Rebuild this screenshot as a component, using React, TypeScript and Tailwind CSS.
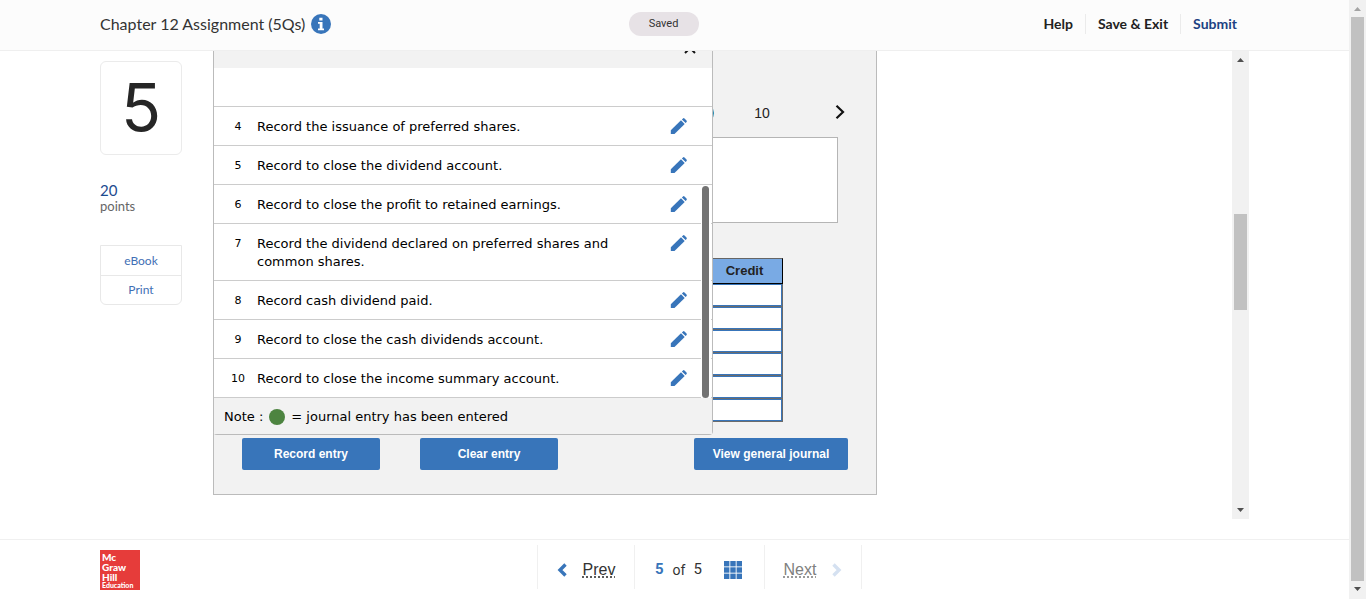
import React, { useState } from 'react';

interface Entry {
  id: number;
  text: string;
}

const entries: Entry[] = [
  { id: 4, text: 'Record the issuance of preferred shares.' },
  { id: 5, text: 'Record to close the dividend account.' },
  { id: 6, text: 'Record to close the profit to retained earnings.' },
  { id: 7, text: 'Record the dividend declared on preferred shares and common shares.' },
  { id: 8, text: 'Record cash dividend paid.' },
  { id: 9, text: 'Record to close the cash dividends account.' },
  { id: 10, text: 'Record to close the income summary account.' },
];

const journalRows = [1, 2, 3, 4, 5, 6];

const Arrow: React.FC<{ down?: boolean; className: string }> = ({ down, className }) => (
  <svg width="7" height="4" viewBox="0 0 7 4" className={className} aria-hidden="true">
    <path d={down ? 'M0 0h7L3.5 4z' : 'M0 4h7L3.5 0z'} fill="currentColor" />
  </svg>
);

const InfoIcon: React.FC = () => (
  <svg width="20" height="20" viewBox="0 0 20 20" aria-hidden="true">
    <circle cx="10" cy="10" r="10" fill="#3875ba" />
    <path d="M8.3 3.8h3.2v2.700H8.3zM7 8h4.500v6.500H13v1.700H7v-1.700h1.700V9.700H7z" fill="#fff" />
  </svg>
);

const PencilIcon: React.FC = () => (
  <svg width="18" height="18" viewBox="0 0 18 18" fill="currentColor" aria-hidden="true">
    <path d="M.8 17V13.300L11 3.300l3.700 3.700L4.500 17z" />
    <path d="M11.900 2.400l1.100-1q.8-.6 1.500.1l2 2q.7.700.1 1.500l-1 1.100z" />
  </svg>
);

const Header: React.FC = () => (
  <header className="grid h-[51px] shrink-0 grid-cols-[1fr_auto_1fr] items-center border-b border-[#efefef] bg-[#fcfcfc] pb-[2px] pl-[100px] pr-28">
    <div className="flex items-center gap-[6px]">
      <h1 className="font-['Lato',sans-serif] text-base text-[#333]">Chapter 12 Assignment (5Qs)</h1>
      <button type="button" aria-label="Assignment information">
        <InfoIcon />
      </button>
    </div>
    <span className="mr-[10px] flex h-6 w-[70px] items-center justify-center rounded-full bg-[#e7e2e6] font-['Roboto',sans-serif] text-[11px] text-[#333]">
      Saved
    </span>
    <nav className="flex items-center justify-end font-['Lato',sans-serif] text-sm font-bold text-[#222]">
      <a href="#help" className="pr-3">Help</a>
      <a href="#save" className="border-l border-[#ebebeb] px-3">Save &amp; Exit</a>
      <a href="#submit" className="border-l border-[#ebebeb] pl-3 text-[#1d4283]">Submit</a>
    </nav>
  </header>
);

const Sidebar: React.FC = () => (
  <aside className="w-[82px] shrink-0 pt-[10px] font-['Lato',sans-serif]">
    <div className="flex h-[94px] items-center justify-center rounded-md border border-[#ebebeb] pb-[2px] font-['Inter',sans-serif] text-[66px] leading-none text-[#262626]">
      5
    </div>
    <div className="mt-[27px] text-[15px] leading-4 text-[#1d4b8f]">20</div>
    <div className="text-[13px] leading-4 text-[#666]">points</div>
    <div className="mt-[31px] flex flex-col rounded-b-md border border-[#e8e8e8] text-center text-xs text-[#3f6fb5]">
      <a href="#ebook" className="leading-[29px]">eBook</a>
      <a href="#print" className="border-t border-[#e8e8e8] leading-[28px]">Print</a>
    </div>
  </aside>
);

const EntryList: React.FC<{ onClose: () => void }> = ({ onClose }) => (
  <div className="absolute -left-px top-0 w-[500px] rounded-b-sm border-x border-b border-[#bbb] bg-white font-['DejaVu_Sans',sans-serif] text-[13px] leading-[18px] text-black">
    <div className="flex h-[17px] justify-end overflow-hidden bg-[#f2f2f2] pr-4">
      <button type="button" onClick={onClose} aria-label="Close" className="-mt-[9px] h-3 w-3">
        <svg width="12" height="12" viewBox="0 0 12 12">
          <path d="M1 1l10 10M11 1L1 11" stroke="#111" strokeWidth="2" />
        </svg>
      </button>
    </div>
    <div className="h-[39px] border-b border-[#ccc]" />
    <ul>
      {entries.map((entry) => (
        <li key={entry.id} className="flex items-start border-b border-[#ccc] pb-[9px] pr-6 pt-[11px]">
          <span className="w-[43px] shrink-0 pl-[5px] text-center text-[11px]">{entry.id}</span>
          <span className="w-[380px]">{entry.text}</span>
          <button type="button" aria-label={`Edit entry ${entry.id}`} className="-mt-px ml-auto text-[#3875ba]">
            <PencilIcon />
          </button>
        </li>
      ))}
    </ul>
    <div className="flex h-9 items-center gap-[6px] bg-[#f2f2f2] pl-[10px] pt-[2px]">
      Note :
      <span className="h-4 w-4 rounded-full bg-[#4d8440]" />
      <span>= journal entry has been entered</span>
    </div>
    {/* list scroll thumb */}
    <div className="absolute bottom-9 right-px h-[212px] w-[10px] bg-white px-[2px] pl-px">
      <div className="h-[212px] rounded-full bg-[#737373]" />
    </div>
  </div>
);

const Worksheet: React.FC = () => {
  const [listOpen, setListOpen] = useState(true);
  const buttonStyle = 'h-8 rounded-xs bg-[#3875ba] text-xs font-bold text-white';

  return (
    <section className="relative ml-[31px] w-[664px] shrink-0 self-start border-x border-b border-[#bbb] bg-[#f2f2f2] px-7 pb-6 pt-12 font-['Liberation_Sans',sans-serif]">
      <div className="flex h-7 items-center justify-end text-sm text-[#222]">
        <button type="button" aria-label="Entry 9" className="h-5 w-5 rounded-full bg-[#1c86ad]" />
        <button type="button" className="ml-7 w-10 text-center">10</button>
        <button type="button" aria-label="Next entries" className="ml-[50px] flex w-4 justify-center">
          <svg width="10" height="16" viewBox="0 0 10 16" fill="none">
            <path d="M1.5 0.8l6.5 6.2-6.5 6.2" stroke="#111" strokeWidth="2.2" />
          </svg>
        </button>
      </div>
      <div className="mr-[10px] mt-[10px] h-[86px] border border-[#b5b5b5] bg-white" />

      <table className="mt-[35px] w-[541px] table-fixed border-separate border-spacing-0">
        <thead>
          <tr className="h-[26px] bg-[#79aae4] text-[13px] leading-none text-[#222]">
            <th className="border-b border-t border-b-black border-t-[#666]" />
            <th className="w-[76px] border-b border-r border-t border-b-black border-r-black border-t-[#666] p-0 pb-[2px]">Credit</th>
          </tr>
        </thead>
        <tbody>
          {journalRows.map((row) => (
            <tr key={row}>
              {['account', 'credit'].map((col) => (
                <td key={col} className="border-b border-r border-[#6b6b6b] p-0">
                  <input
                    type="text"
                    aria-label={`${col} ${row}`}
                    className="block h-[22px] w-full border border-[#3875ba] bg-white px-1 text-xs"
                  />
                </td>
              ))}
            </tr>
          ))}
        </tbody>
      </table>

      <div className="mt-4 flex">
        <button type="button" className={`${buttonStyle} w-[138px]`}>Record entry</button>
        <button type="button" className={`${buttonStyle} ml-10 w-[138px]`}>Clear entry</button>
        <button type="button" className={`${buttonStyle} ml-auto w-[154px]`}>View general journal</button>
      </div>

      {listOpen && <EntryList onClose={() => setListOpen(false)} />}
    </section>
  );
};

const Chevron: React.FC<{ right?: boolean }> = ({ right }) => (
  <svg width="10" height="14" viewBox="0 0 10 14" fill="none" aria-hidden="true">
    <path d={right ? 'M1.500 1.500L7 7l-5.500 5.500' : 'M8.500 1.500L3 7l5.500 5.500'} stroke="currentColor" strokeWidth="3.4" />
  </svg>
);

const Footer: React.FC = () => (
  <footer className="grid h-[60px] shrink-0 grid-cols-[1fr_auto_1fr] items-start border-t border-[#f0f0f0] bg-white pl-[100px] pr-[50px]">
    <div className="mt-[10px] h-10 w-10 bg-[#e63c3a] pl-[2px] pt-[2px] font-['Lato',sans-serif] text-[10px] font-black leading-[10px] text-white">
      <div>Mc</div>
      <div>Graw</div>
      <div>Hill</div>
      <div className="text-[7px] leading-[7px]">Education</div>
    </div>
    <nav className="mt-[5px] flex h-11 items-center text-base text-[#333]">
      <a href="#prev" className="flex h-full w-[97px] items-center justify-center gap-4 border-l border-[#f0f0f0] pt-[5px] font-['Liberation_Sans',sans-serif]">
        <span className="text-[#3875ba]"><Chevron /></span>
        <span className="underline decoration-dotted underline-offset-2">Prev</span>
      </a>
      <div className="flex h-full w-[130px] items-center border-l border-[#f0f0f0] pl-5 pt-[5px] font-['Roboto',sans-serif] text-sm">
        <b className="text-[15px] text-[#3875ba]">5</b>
        <span className="ml-[9px]">of</span>
        <span className="ml-2 text-[15px]">5</span>
        <button type="button" aria-label="Question grid" className="ml-[22px]">
          <svg width="18" height="18" viewBox="0 0 18 18" fill="#3875ba">
            {[0, 6.300, 12.600].map((y) => [0, 6.300, 12.600].map((x) => (
              <rect key={`${x}-${y}`} x={x} y={y} width="5.400" height="5.400" />
            )))}
          </svg>
        </button>
      </div>
      <a href="#next" className="flex h-full w-[98px] items-center justify-center gap-4 border-x border-[#f0f0f0] pt-[5px] font-['Liberation_Sans',sans-serif] text-[#808080]">
        <span className="underline decoration-dotted underline-offset-2">Next</span>
        <span className="text-[#d5e1f1]"><Chevron right /></span>
      </a>
    </nav>
  </footer>
);

const App: React.FC = () => {
  return (
    <div className="flex h-screen overflow-hidden bg-white">
      <div className="flex min-w-0 flex-1 flex-col">
        <Header />
        <main className="flex min-h-0 flex-1 overflow-hidden px-[100px]">
          <Sidebar />
          <Worksheet />
          <div className="mb-5 ml-auto flex w-[17px] flex-col items-center bg-[#f1f1f1] py-[7px] text-[#505050]">
            <Arrow className="shrink-0" />
            <div className="mt-[152px] h-24 w-[13px] bg-[#c1c1c1]" />
            <Arrow down className="mt-auto shrink-0" />
          </div>
        </main>
        <Footer />
      </div>
      <div className="flex w-[17px] shrink-0 flex-col items-center bg-[#f1f1f1] pb-2 pt-[7px]">
        <Arrow className="shrink-0 text-[#a3a3a3]" />
        <div className="my-[6px] w-[13px] flex-1 bg-[#c1c1c1]" />
        <Arrow down className="shrink-0 text-[#505050]" />
      </div>
    </div>
  );
};

export default App;
